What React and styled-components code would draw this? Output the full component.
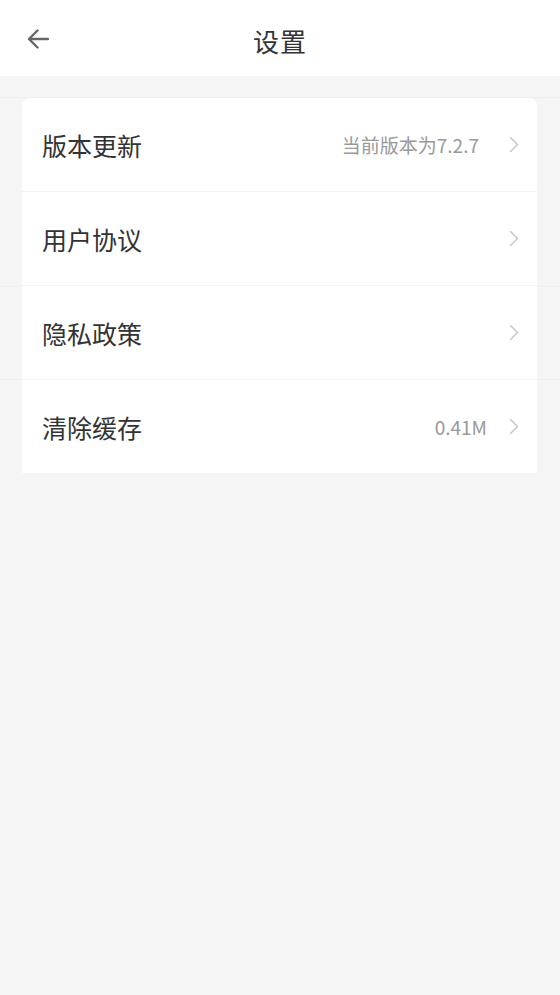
import React from 'react';
import styled, {createGlobalStyle} from 'styled-components';

const GlobalStyle = createGlobalStyle`
	html, body {
		margin: 0;
		padding: 0;
		background: #f5f5f5;
		font-family: "Noto Sans CJK SC", "Noto Sans", Roboto, sans-serif;
	}
`

const items = [
	{label: '版本更新', extra: '当前版本为7.2.7', wide: true},
	{label: '用户协议'},
	{label: '隐私政策'},
	{label: '清除缓存', extra: '0.41M'},
];

const BackIcon = () => (
	<svg width="22" height="20" viewBox="0 0 22 20" fill="none">
		<path d="M21 10H2.5M10.5 1.5L2 10l8.5 8.5" stroke="#666" strokeWidth="2.4" strokeLinecap="round" strokeLinejoin="round" />
	</svg>
)

const Chevron = () => (
	<svg width="10" height="17" viewBox="0 0 10 17" fill="none">
		<path d="M1.5 1.5L8.5 8.5L1.5 15.5" stroke="#c8c8c8" strokeWidth="1.5" strokeLinecap="round" strokeLinejoin="round" />
	</svg>
)

const Settings = () => {
	return (
	<Page>
		<GlobalStyle />
		<Header>
			<BackButton><BackIcon /></BackButton>
			<Title>设置</Title>
		</Header>
		<Body>
			<Card>
				{items.map((item, i) => {
					return (
					<Row key={i} last={i === items.length - 1}>
						<Label>{item.label}</Label>
						<Right>
							{item.extra && <Extra wide={item.wide}>{item.extra}</Extra>}
							<Chevron />
						</Right>
					</Row>
					)
				})}
			</Card>
		</Body>
	</Page>
	)
}

const Page = styled.div`
	width: 100%;
	min-height: 995px;
	display: flex;
	flex-direction: column;
	background: #f5f5f5;
`

const Header = styled.div`
	height: 76px;
	background: #fff;
	display: flex;
	align-items: center;
	justify-content: center;
	position: relative;
	flex-shrink: 0;
`

const BackButton = styled.div`
	position: absolute;
	left: 27px;
	top: 29px;
	display: flex;
`

const Title = styled.h1`
	margin: 0;
	margin-top: 4px;
	font-size: 26px;
	font-weight: 400;
	color: #333;
	letter-spacing: 1px;
`

const Body = styled.div`
	flex: 1;
	padding: 22px 23px 0 22px;
	background:
		linear-gradient(#eeeeee, #eeeeee) 0 21px / 100% 1px no-repeat,
		linear-gradient(#efefef, #efefef) 0 210px / 100% 1px no-repeat,
		linear-gradient(#efefef, #efefef) 0 303px / 100% 1px no-repeat,
		#f5f5f5;
`

const Card = styled.div`
	background: #fff;
	border-radius: 8px 8px 0 0;
	display: flex;
	flex-direction: column;
`

const Row = styled.div`
	height: 93px;
	display: flex;
	align-items: center;
	justify-content: space-between;
	padding: 0 18px 0 20px;
	border-bottom: ${props => props.last ? 'none' : '1px solid #f3f3f3'};
`

const Label = styled.span`
	font-size: 25px;
	color: #333;
`

const Right = styled.div`
	display: flex;
	align-items: center;
	gap: 22px;
`

const Extra = styled.span`
	font-size: 19px;
	color: #999;
	margin-right: ${props => props.wide ? '8px' : '0'};
`

export default Settings;
